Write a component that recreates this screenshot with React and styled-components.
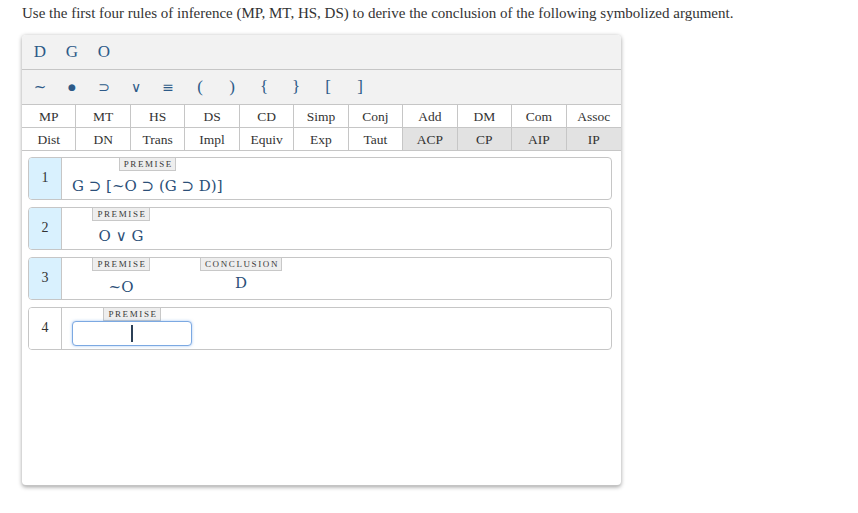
import React from "react";
import styled, { createGlobalStyle } from "styled-components";

const GlobalStyle = createGlobalStyle`
  html, body { margin: 0; padding: 0; background: #fff; }
  body { font-family: "Liberation Serif", "Times New Roman", serif; min-height: 513px; }
`;

const Page = styled.div`
  padding: 5px 0 20px 22px;
`;

const Instruction = styled.p`
  margin: 0;
  font-size: 15px;
  line-height: 17px;
  color: #333;
`;

const Panel = styled.div`
  margin-top: 13px;
  width: 599px;
  height: 450px;
  background: #fff;
  border-radius: 4px;
  border-bottom: 1px solid #c4c4c4;
  box-shadow: 0 1px 4px rgba(0, 0, 0, 0.38);
  overflow: hidden;
  display: flex;
  flex-direction: column;
`;

const SymbolRow = styled.div`
  height: 34px;
  background: #f2f2f2;
  border-bottom: 1px solid #c6c6c6;
  display: flex;
  align-items: center;
  padding-left: 2px;
`;

const SymbolKey = styled.span`
  width: 32px;
  text-align: center;
  font-size: ${(p) => p.$size || 17}px;
  color: #2d5a88;
  font-family: ${(p) =>
    p.$sans ? '"DejaVu Sans", sans-serif' : '"Liberation Serif", serif'};
`;

const RuleGrid = styled.div`
  display: grid;
  grid-template-columns: repeat(11, 1fr);
  grid-auto-rows: 23px;
`;

const RuleCell = styled.div`
  display: flex;
  align-items: center;
  justify-content: center;
  padding-top: 1px;
  font-size: 13.5px;
  color: #333;
  background: ${(p) => (p.$muted ? "#e2e2e2" : "#fff")};
  border-right: 1px solid #c6c6c6;
  border-bottom: 1px solid #c6c6c6;
  &:nth-child(11n) { border-right: none; }
`;

const Proof = styled.div`
  padding: 6px 9px 0 6px;
  display: flex;
  flex-direction: column;
  gap: 7px;
`;

const Line = styled.div`
  height: 41px;
  border: 1px solid #c6c6c6;
  border-radius: 4px;
  display: flex;
`;

const LineNumber = styled.div`
  width: 32px;
  flex: none;
  border-right: 1px solid #c6c6c6;
  background: ${(p) => (p.$active ? "#fff" : "#d9f1fe")};
  border-radius: 3px 0 0 3px;
  display: flex;
  align-items: center;
  justify-content: center;
  padding-bottom: 2px;
  font-size: 14px;
  color: #333;
`;

const LineBody = styled.div`
  display: flex;
  gap: 22px;
  padding-left: 10px;
`;

const Column = styled.div`
  min-width: 98px;
  display: flex;
  flex-direction: column;
  align-items: center;
  margin-top: -1px;
`;

const Tag = styled.span`
  height: 14px;
  box-sizing: border-box;
  padding: 0 2px 0 4px;
  background: #eeeeee;
  border: 1px solid #c8c8c8;
  font-size: 9px;
  letter-spacing: 1.6px;
  line-height: 12px;
  color: #3a3a3a;
`;

const Formula = styled.div`
  margin-top: ${(p) => p.$offset || 4}px;
  font-size: 15px;
  line-height: 22px;
  color: #2b4f78;
  white-space: nowrap;
  font-family: "DejaVu Serif", "Liberation Serif", serif;
`;

const InputBox = styled.div`
  width: 120px;
  height: 25px;
  box-sizing: border-box;
  border: 1px solid #7ca9e2;
  border-radius: 4px;
  box-shadow: 0 0 3px rgba(90, 150, 230, 0.55);
  display: flex;
  align-items: center;
  justify-content: center;
  background: #fff;
`;

const Caret = styled.span`
  width: 2px;
  height: 17px;
  background: #2b3f55;
`;

const variables = ["D", "G", "O"];
const operators = [
  { s: "~", sans: true, size: 15 },
  { s: "●", sans: true, size: 9 },
  { s: "⊃", sans: true, size: 14 },
  { s: "∨", sans: true, size: 14 },
  { s: "≡", sans: true, size: 14 },
  { s: "(" },
  { s: ")" },
  { s: "{" },
  { s: "}" },
  { s: "[" },
  { s: "]" },
];
const rules = [
  "MP", "MT", "HS", "DS", "CD", "Simp", "Conj", "Add", "DM", "Com", "Assoc",
  "Dist", "DN", "Trans", "Impl", "Equiv", "Exp", "Taut", "ACP", "CP", "AIP", "IP",
];
const muted = new Set(["ACP", "CP", "AIP", "IP"]);

const lines = [
  { n: 1, cols: [{ tag: "PREMISE", text: "G ⊃ [~O ⊃ (G ⊃ D)]" }] },
  { n: 2, cols: [{ tag: "PREMISE", text: "O ∨ G" }] },
  {
    n: 3,
    cols: [
      { tag: "PREMISE", text: "~O", offset: 5 },
      { tag: "CONCLUSION", text: "D", offset: 1 },
    ],
  },
  { n: 4, active: true, cols: [{ tag: "PREMISE", input: true }] },
];

export default function App() {
  return (
    <>
      <GlobalStyle />
      <Page>
        <Instruction>
          Use the first four rules of inference (MP, MT, HS, DS) to derive the
          conclusion of the following symbolized argument.
        </Instruction>
        <Panel>
          <SymbolRow>
            {variables.map((v) => (
              <SymbolKey key={v}>{v}</SymbolKey>
            ))}
          </SymbolRow>
          <SymbolRow>
            {operators.map((o, i) => (
              <SymbolKey key={i} $sans={o.sans} $size={o.size}>
                {o.s}
              </SymbolKey>
            ))}
          </SymbolRow>
          <RuleGrid>
            {rules.map((r) => (
              <RuleCell key={r} $muted={muted.has(r)}>
                {r}
              </RuleCell>
            ))}
          </RuleGrid>
          <Proof>
            {lines.map((line) => (
              <Line key={line.n}>
                <LineNumber $active={line.active}>{line.n}</LineNumber>
                <LineBody>
                  {line.cols.map((c, i) => (
                    <Column key={i}>
                      <Tag>{c.tag}</Tag>
                      {c.input ? (
                        <InputBox>
                          <Caret />
                        </InputBox>
                      ) : (
                        <Formula $offset={c.offset}>{c.text}</Formula>
                      )}
                    </Column>
                  ))}
                </LineBody>
              </Line>
            ))}
          </Proof>
        </Panel>
      </Page>
    </>
  );
}
